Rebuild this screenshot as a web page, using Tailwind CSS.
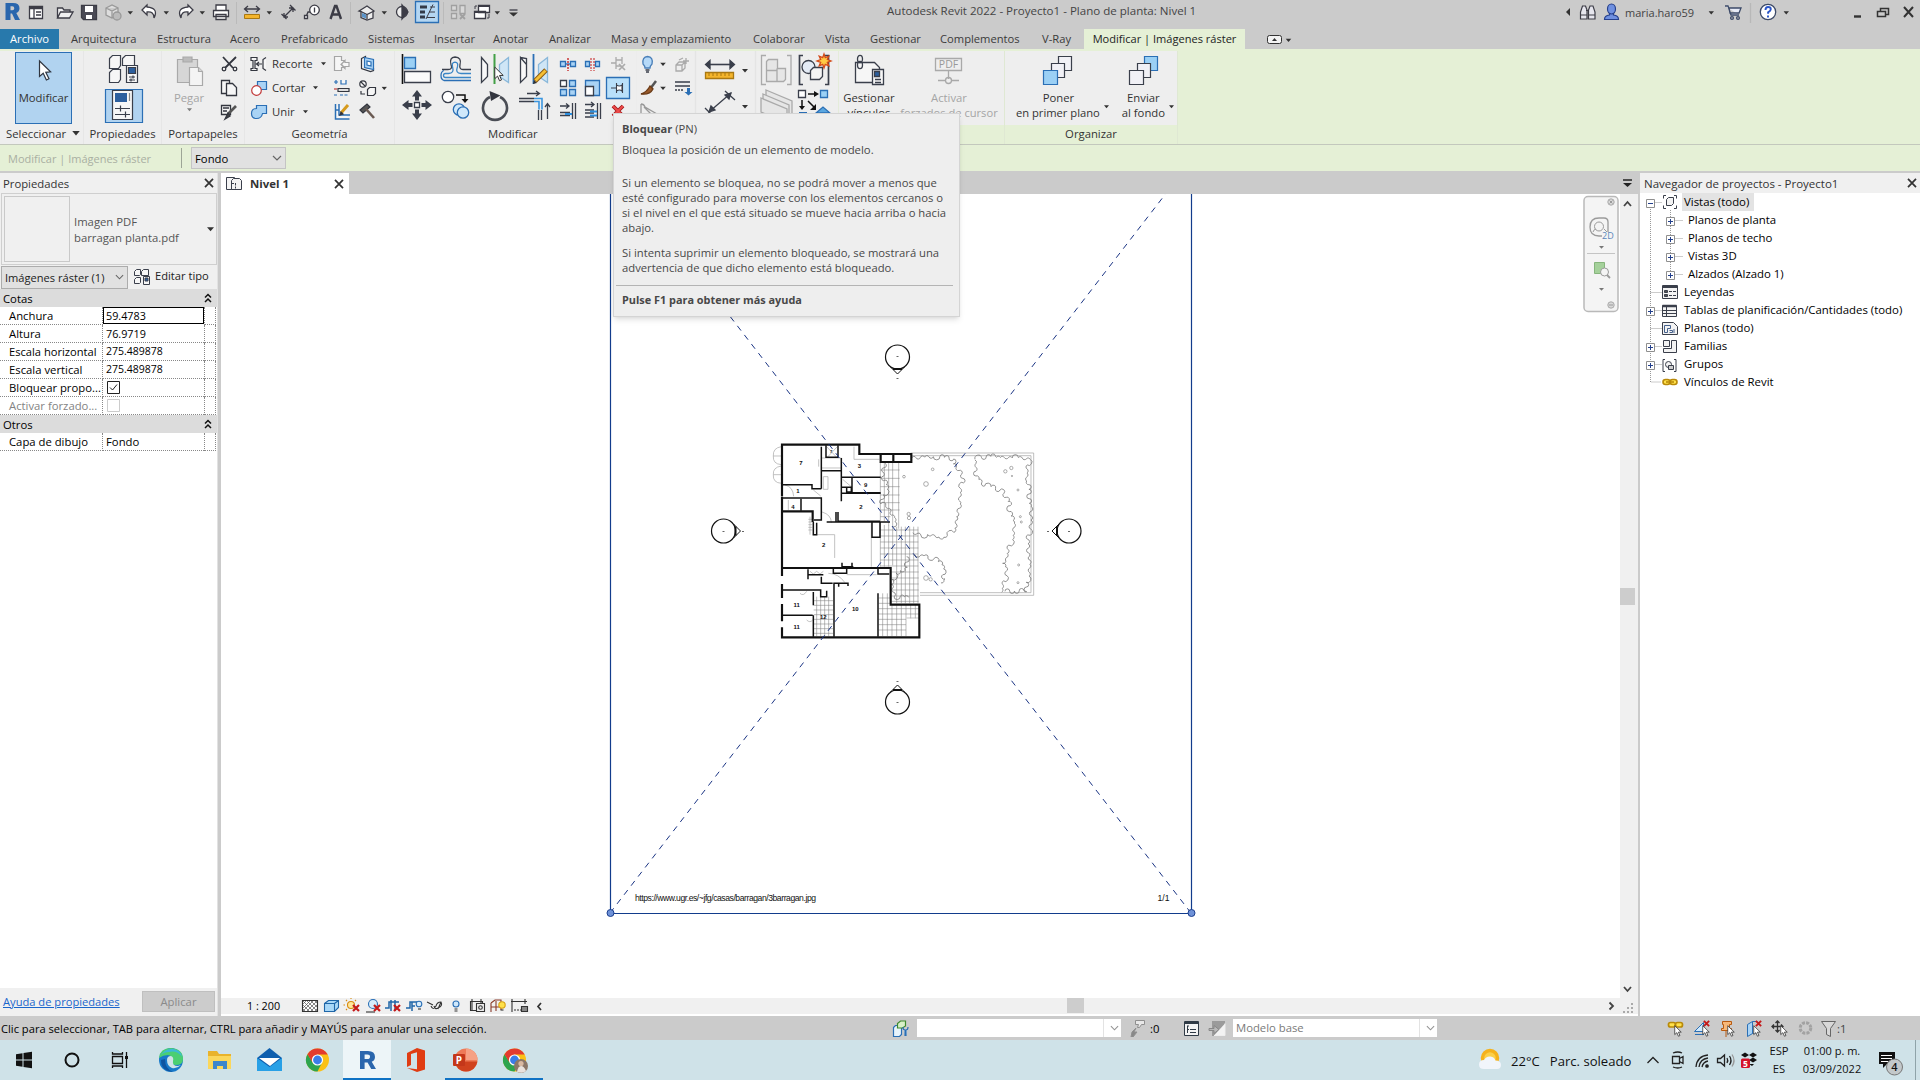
<!DOCTYPE html>
<html lang="es">
<head>
  <meta charset="UTF-8" />
  <meta name="viewport" content="width=device-width,initial-scale=1.0" />
  <title>Autodesk Revit 2022 - Proyecto1</title>
  <script src="https://cdn.jsdelivr.net/npm/@tailwindcss/browser@4"></script>
</head>

<body class="w-[1920px] h-[1080px] overflow-hidden flex flex-col bg-[#cbcbcb] font-['Open_Sans','Noto_Sans',sans-serif] text-[11.3px] leading-[15px] text-[#2e2e2e] whitespace-nowrap">

  <!-- shared symbols -->
  <svg class="hidden">
    <symbol id="caret" viewBox="0 0 6 4"><path d="M0 0h6L3 3.6z" fill="#333" /></symbol>
    <symbol id="close" viewBox="0 0 10 10"><path d="M1 .8l8 8.4M9 .8L1 9.2" stroke="#333" stroke-width="1.7" fill="none" /></symbol>
    <symbol id="chev" viewBox="0 0 10 6"><path d="M1 1l4 4 4-4" stroke="#666" stroke-width="1.2" fill="none" /></symbol>
    <symbol id="dblup" viewBox="0 0 8 10"><path d="M1 4.5l3-3 3 3M1 9l3-3 3 3" stroke="#111" stroke-width="1.5" fill="none" /></symbol>
    <symbol id="plus" viewBox="0 0 9 9"><path d="M.5.5h8v8h-8z" fill="#fff" stroke="#8f8f8f" /><path d="M2 4.5h5M4.5 2v5" stroke="#23408c" /></symbol>
    <symbol id="minus" viewBox="0 0 9 9"><path d="M.5.5h8v8h-8z" fill="#fff" stroke="#8f8f8f" /><path d="M2 4.5h5" stroke="#23408c" /></symbol>
    <symbol id="cursor" viewBox="0 0 9 14"><path d="M.7.8v10.4l2.5-2.3 1.8 4.2 1.8-.8-1.8-4h3.3z" fill="#fff" stroke="#333" stroke-width=".9" /></symbol>
    <symbol id="redx" viewBox="0 0 8 8"><path d="M1 1l6 6M7 1L1 7" stroke="#c41a1a" stroke-width="2.2" /></symbol>
    <symbol id="chrome" viewBox="0 0 24 24">
      <circle cx="12" cy="12" r="11.5" fill="#fbc116" />
      <path d="M2 6.2A11.5 11.5 0 0 0 12 23.5L16.6 14.6 7.4 14.6z" fill="#2da44e" />
      <path d="M12 6.6h10.2L22 6.2A11.5 11.5 0 0 0 2 6.2l5 8.4z" fill="#e33b2e" />
      <circle cx="12" cy="12" r="5.6" fill="#fff" /><circle cx="12" cy="12" r="4.4" fill="#3a7de8" />
    </symbol>
  </svg>

  <!-- title bar -->
  <header class="flex h-[29px] shrink-0">
    <svg class="w-[530px] h-[29px] shrink-0" viewBox="0 0 530 29" fill="none" stroke="#3c3c46" stroke-width="1.3">
      <path d="M5.500 3h7.500q6.500 0 6.500 5.200 0 3.500-3.200 4.800L20 20h-5l-3-6.500h-1.500V20h-5zM10.500 6.300v4h1.800q2 0 2-2t-2-2z" fill="#2a66ad" fill-rule="evenodd" stroke="none" />
      <path d="M29.500 6.500h13v12h-13z" fill="#fff" /><path d="M29.500 8h13" stroke-width="2.500" /><path d="M34 9v9M36 12h5M36 15h5" />
      <path d="M57.500 18V8h5l1.500 2h6v2M57.500 18l3-6h12.500l-3.500 6z" fill="#f0f0f0" />
      <path d="M81.500 5.500h15v14h-13l-2-2z" fill="#4a4a55" /><path d="M85 6h8v6h-8zM86 15h6v4h-6z" fill="#fff" stroke="none" />
      <g stroke="#999"><path d="M106 8l6-3 6 3v7l-6 3-6-3zM106 8l6 3 6-3M112 11v7" fill="#ddd" /><circle cx="117" cy="16" r="4" fill="#bbb" /></g>
      <path d="M147 5l-5 5 5 5v-3q7-1 7 6 5-10-7-11z" fill="#fff" />
      <path d="M188 5l5 5-5 5v-3q-7-1-7 6-5-10 7-11z" fill="#fff" />
      <path d="M216 10V5h10v5M213.500 10.500h15v6h-15zM216 14.500h10v5h-10z" fill="#fff" />
      <path d="M236.500 2v22M350.500 2v22M443.500 2v22" stroke="#bababa" stroke-width="1" />
      <path d="M245 9h14M248 6l-3.500 3 3.500 3M256 6l3.500 3-3.500 3" /><path d="M244.500 14.500h15v4h-15z" fill="#f4b52c" stroke="#a97812" stroke-width="1" />
      <path d="M284 17l9-9M281.500 14l5 5M290 5l5.500 5.500M284 13v4h4M289 8h4v4" />
      <circle cx="314.500" cy="10" r="4.800" fill="#fff" /><path d="M314.500 7.500v5M306 17l2-5h2" /><path d="M304.500 15.500h3v3h-3z" fill="#fff" />
      <path d="M330.500 19l4.500-13h1.500L341 19M332 14.500h7" stroke-width="2.400" />
      <path d="M359 11l8-5 7 5-1 1v6l-6 2-6-2.500v-6z" fill="#eee" /><path d="M361 11.500l6 3 6-3M367 14v5" /><path d="M362 13l4 1.500v4l-4-1.500z" fill="#5a93c8" stroke="none" />
      <circle cx="402" cy="12" r="5.500" fill="#eee" /><path d="M402 5l6 7-6 7z" fill="#3c3c46" />
      <path d="M415.500 1.500h23v21h-23z" fill="#b4d6f2" stroke="#2b6fb5" /><path d="M420 7h7M420 12h5M420 17h5" stroke-width="3" stroke="#333a48" /><path d="M433 4.500l-7 14.500" stroke-width="1" /><path d="M430 7h5M429 12h6M427 17.500h8" stroke-width="1" />
      <g stroke="#a0a0a0"><path d="M451.500 5.500h5v5h-5zM451.500 13.500h5v5h-5zM460 5.500h5v8h-5z" fill="#d8d8d8" /><path d="M460 14l5 5M465 14l-5 5" stroke-width="1.800" /></g>
      <path d="M478.500 5.500h11v7h-11zM474.500 11.500h11v7h-11z" fill="#fff" /><path d="M478.500 6h11M474.500 12h11" stroke-width="1.800" /><path d="M489 14v4h-2M475 9V6h2" stroke-width="1" />
      <path d="M509.500 10h8" /><path d="M509 12.500h9l-4.500 4z" fill="#333" stroke="none" />
      <g stroke="none"><use href="#caret" x="127.500" y="11" width="5.500" height="4" /><use href="#caret" x="163.500" y="11" width="5.500" height="4" /><use href="#caret" x="199.500" y="11" width="5.500" height="4" /><use href="#caret" x="266.500" y="11" width="5.500" height="4" /><use href="#caret" x="381.500" y="11" width="5.500" height="4" /><use href="#caret" x="494.500" y="11" width="5.500" height="4" /></g>
    </svg>
    <h1 class="w-[1023px] pl-[357px] pt-[3px] text-[11.550px] text-[#444]">Autodesk Revit 2022 - Proyecto1 - Plano de planta: Nivel 1</h1>
    <div class="flex items-start">
      <svg class="w-[72px] h-[29px]" viewBox="1553 0 72 29" fill="#e6e6ee" stroke="#3c3c46" stroke-width="1.200">
        <path d="M1570 8v8l-4-4z" fill="#333" stroke="none" />
        <path d="M1580.500 19v-7l2-6h3l1.500 4v9zM1588.500 19v-9l1.500-4h3l2 6v7zM1586 10.500h3M1580.500 15h6M1588.500 15h6" />
        <g fill="#6f90e0" stroke="#26408c"><path d="M1604.500 19.500q0-4 5-4.500v-2h4v2q5 .5 5 4.500z" /><ellipse cx="1611.500" cy="9" rx="4" ry="5" /></g>
      </svg>
      <span class="w-[80px] pt-[5px] text-[11px] text-[#444]">maria.haro59</span>
      <svg class="w-[215px] h-[29px]" viewBox="1705 0 215 29" fill="none" stroke="#3c4a68" stroke-width="1.300">
        <use href="#caret" x="1708.500" y="11" width="5.500" height="4" stroke="none" /><use href="#caret" x="1783.500" y="11" width="5.500" height="4" stroke="none" />
        <path d="M1725 6h3l3 9h8M1729 8h12l-2 5h-9z" fill="#e8ecf8" /><circle cx="1732" cy="18" r="1.400" /><circle cx="1738" cy="18" r="1.400" />
        <path d="M1750.500 3v20" stroke="#b8b8b8" />
        <circle cx="1768" cy="12" r="7.700" fill="#fff" /><path d="M1765.500 10q0-3 2.600-3 2.700 0 2.700 2.300 0 1.500-2.700 3v1.500M1768 15.500v2" stroke="#2a55c8" stroke-width="1.900" />
        <path d="M1854 16.500h7" stroke="#333" stroke-width="2.400" /><path d="M1880.500 11V8.500h8v6h-3M1877.500 11.500h8v5h-8z" stroke="#333" stroke-width="1.500" />
        <path d="M1904 7l9 10M1913 7l-9 10" stroke="#333" stroke-width="2" />
      </svg>
    </div>
  </header>

  <!-- ribbon tabs -->
  <nav class="flex h-5 shrink-0 leading-5 text-[11.200px] text-[#3a3a3a]">
    <a class="w-[59px] bg-[#2879ac] text-white text-center">Archivo</a>
    <a class="ml-3 w-[86px]">Arquitectura</a>
    <a class="w-[73px]">Estructura</a>
    <a class="w-[51px]">Acero</a>
    <a class="w-[87px]">Prefabricado</a>
    <a class="w-[66px]">Sistemas</a>
    <a class="w-[59px]">Insertar</a>
    <a class="w-[56px]">Anotar</a>
    <a class="w-[62px]">Analizar</a>
    <a class="w-[142px]">Masa y emplazamiento</a>
    <a class="w-[72px]">Colaborar</a>
    <a class="w-[45px]">Vista</a>
    <a class="w-[70px]">Gestionar</a>
    <a class="w-[102px]">Complementos</a>
    <a class="w-[42px]">V-Ray</a>
    <a class="w-[161px] bg-[#e5f0d6] text-center text-[11.050px] text-[#222]">Modificar | Imágenes ráster</a>
    <svg class="ml-5 w-8 h-5" viewBox="1265 29 32 20"><rect x="1267.500" y="35.500" width="14" height="8" rx="2" fill="#f3f3f3" stroke="#333" /><path d="M1272 41h5l-2.500-3z" fill="#333" /><use href="#caret" x="1285.500" y="38.500" width="6" height="4" /></svg>
  </nav>

  <!-- ribbon -->
  <section class="relative flex h-24 shrink-0 bg-[#e5f0d6] border-t-2 border-[#e5f0d6] border-b border-b-[#c3c8bd] text-[#333]">
    <div class="w-[84px] bg-[#eeeeee] border-r border-[#e6e6e6] pl-[15px] pt-px">
      <div class="w-[57px] h-[72px] bg-[#b1d3f0] border border-[#2b6fb5] flex flex-col items-center">
        <svg class="w-5 h-7 mt-[3px]" viewBox="0 0 20 28"><path d="M5.500 5v15.500l3.700-3.200 3.200 6.700 2.600-1.300-3.200-6.400 4.800-.5z" fill="#fff" stroke="#2f3540" stroke-width="1.200" /></svg>
        <span class="mt-[6px]">Modificar</span>
      </div>
      <p class="-ml-[9px] mt-[2px] flex items-center gap-[6px]">Seleccionar <svg class="w-2 h-[5px]"><use href="#caret" /></svg></p>
    </div>

    <div class="w-[78px] bg-[#eeeeee] border-r border-[#e6e6e6] flex flex-col items-center">
      <svg class="w-[78px] h-[75px] shrink-0" viewBox="84 51 78 75" fill="#f6f6f6" stroke="#3a3f4b" stroke-width="1.200">
        <path d="M109.500 58.500l3-3h8v10l-2 3h-9zM122.500 58.500l3-3h9v10h-12zM109.500 72.500l3-3h8v10l-2 3h-9z" />
        <path d="M126.500 65.500h11v17h-11z" /><path d="M128.500 67.500h7v6h-7z" fill="#2c5f9e" /><path d="M129 77h6M129 80h6M133 75.500v3M131 78.500v3" />
        <path d="M105.500 89.500h37v33h-37z" fill="#b1d3f0" stroke="#2b6fb5" /><path d="M112.500 90.500h20v29h-20z" /><path d="M115 93h12v9h-12z" fill="#2c5f9e" stroke="none" /><path d="M129.500 93v8" stroke="#888" /><path d="M115 108.500h15M115 114.500h15M120.500 105.500v6M125.500 111.500v6" />
      </svg>
      <span>Propiedades</span>
    </div>

    <div class="w-[83px] bg-[#eeeeee] border-r border-[#e6e6e6] flex flex-col items-center">
      <div class="flex h-[75px] self-start">
        <div class="w-[54px] flex flex-col items-center text-[#a5a5a5]">
          <svg class="w-[30px] h-[34px] mt-[3px]" viewBox="0 0 30 34" stroke="#a9a9a9" stroke-width="1.200" fill="#d6d6d6"><path d="M3.500 5.500h20v23h-20z" /><path d="M9 3h9v5H9z" fill="#bbb" /><path d="M15.500 13.500h9l4 4v14h-13z" fill="#f4f4f4" /><path d="M24.500 13.500v4h4" /></svg>
          <span class="mt-[2px]">Pegar</span>
          <svg class="w-[5px] h-1 mt-[3px] opacity-60"><use href="#caret" /></svg>
        </div>
        <svg class="w-7 h-[75px]" viewBox="216 51 28 75" fill="#f6f6f6" stroke="#33363f" stroke-width="1.300">
          <path d="M223 57l10 11M236 57l-11 11" stroke-width="1.800" /><circle cx="224" cy="69" r="1.800" /><circle cx="235" cy="69" r="1.800" />
          <path d="M221.500 80.500h8v13h-8z" /><path d="M226.500 83.500h6l4 4v8h-10z" />
          <path d="M221.500 105.500h9v9h-9zM223 108h6M223 111h4" /><path d="M236 106l-8 8" stroke="#555" stroke-width="2.600" /><path d="M228 113l-3 6 5-3z" fill="#444" />
        </svg>
      </div>
      <span>Portapapeles</span>
    </div>

    <div class="w-[150px] bg-[#eeeeee] border-r border-[#e6e6e6] flex flex-col items-center">
      <div class="flex h-[75px] self-start">
        <svg class="w-[27px] h-[75px]" viewBox="245 51 27 75" fill="#f6f6f6" stroke="#33363f" stroke-width="1.200">
          <path d="M251 57.500h6v3h-2v8h2v2h-6v-2h2v-8h-2zM266 57.500l-3 2v9l3 2M262 64h-5M259 62l-2.500 2 2.500 2" />
          <path d="M257.500 81.500h9v8h-9z" fill="#a9d3f5" stroke="#2b6fb5" /><circle cx="256.500" cy="90.500" r="4.800" fill="#fff" stroke="#c23b3b" />
          <path d="M256.500 105.500h10v8h-4q-1 5-6 5t-5-5 5-5z" fill="#a9d3f5" stroke="#2b6fb5" />
        </svg>
        <div class="w-[58px] flex flex-col pt-[5px] gap-[9px]">
          <span class="flex items-center gap-2">Recorte <svg class="w-[5px] h-1"><use href="#caret" /></svg></span>
          <span class="flex items-center gap-2">Cortar <svg class="w-[5px] h-1"><use href="#caret" /></svg></span>
          <span class="flex items-center gap-2">Unir <svg class="w-[5px] h-1"><use href="#caret" /></svg></span>
        </div>
        <svg class="w-[64px] h-[75px]" viewBox="330 51 64 75" fill="#f6f6f6" stroke="#33363f" stroke-width="1.200">
          <g stroke="#a5a5a5"><path d="M334.500 56.500h7v4h3l-3 4 3 3h-3v3h-7zM341 64.500l4-4v2h4v4h-4v2z" /></g>
          <path d="M361.500 58.500l4-2v11l8 1v2l-3 1-9-3z" /><path d="M364.500 57.500l9 2v10l-9-2z" fill="#a9d3f5" stroke="#2b6fb5" /><path d="M367 61l4 1v4l-4-1z" fill="#fff" stroke="#2b6fb5" />
          <path d="M334 82h4M336 80v4M341 80v4h5v-4" stroke="#2b6fb5" /><path d="M338 88.500h11v3h-11z" fill="#ddd" /><path d="M334 95h4M340 95h9" stroke="#2b6fb5" stroke-dasharray="3 1.500" /><path d="M334 89h3" stroke="#c23b3b" />
          <circle cx="363" cy="84" r="3.200" /><path d="M361 82l4 4M361 91v3h4" /><path d="M367.500 89.500l2-2h6v6l-2 2h-6z" />
          <path d="M335.500 104v15h14M339 104v11h11M335.500 110h3" stroke="#2b6fb5" stroke-width="1.500" /><path d="M341 113l7-8" stroke="#d69a1c" stroke-width="3" /><path d="M340 115l1-3 2 2z" fill="#333" />
          <path d="M360 110l7-6 3 3-7 6z" fill="#555" /><path d="M366 109l8 9" stroke="#6a5a52" stroke-width="2.600" />
          <use href="#caret" x="381.500" y="86.500" width="5.500" height="4" stroke="none" />
        </svg>
      </div>
      <span>Geometría</span>
    </div>

    <div class="w-[241px] bg-[#eeeeee] flex flex-col">
      <svg class="w-[241px] h-[75px] shrink-0" viewBox="395 51 241 75" fill="none" stroke="#3a3f4b" stroke-width="1.300">
        <path d="M402.500 54v30" stroke-width="1.600" stroke="#111" /><path d="M404.500 57.500h11v11h-11z" fill="#9bd0f5" stroke="#2b6fb5" /><path d="M404.500 71.500h26v11h-26z" fill="#fafafa" />
        <path d="M442 69.500h6q5 0 3-5-2-7 4-7.500 7 .5 5 7.500-1 5 3 5h8" /><path d="M471 80.500h-27q-3-1-3-5t3-5" stroke="#2b6fb5" /><path d="M471 73.500h-10q-6 0-3.500-7 1-4-2.500-4.300-3.500.3-2.500 4.300 2 7-4 7h-3q-2 0-2 2t2 2h25.500" stroke="#3b86c6" />
        <path d="M481.500 57.500l6 7v12l-6 6z" fill="#f8f8f8" /><path d="M508.500 57.500l-9 7v12l9 6z" fill="#cfe6f6" stroke="#8ab8da" /><path d="M494.500 54v30" stroke="#43a047" stroke-width="2" /><use href="#cursor" x="494" y="66" width="10" height="16" stroke="none" />
        <path d="M520.500 57.500l6 7v12l-6 6zM526.500 64.500v-6l-6-1" fill="#f8f8f8" /><path d="M547.500 57.500l-9 7v12l9 6z" fill="#cfe6f6" stroke="#8ab8da" /><path d="M533.500 54v30" stroke="#2b6fb5" stroke-width="1.800" /><path d="M535 81l11-11" stroke="#8a5a10" stroke-width="5" /><path d="M535.500 80.500l10-10" stroke="#f5bf35" stroke-width="3" /><path d="M533 84l1-4 3 3z" fill="#333" stroke="none" />
        <path d="M560.500 61.500h5v5h-5zM570.500 61.500h5v5h-5z" fill="#a9d3f5" stroke="#2b6fb5" /><path d="M565 64h6" stroke="#2b6fb5" /><path d="M568 58v13" stroke="#c41a1a" stroke-dasharray="2 1" />
        <path d="M585.500 61.500h4v5h-4zM595.500 61.500h4v5h-4z" fill="#a9d3f5" stroke="#2b6fb5" /><path d="M591 58v13M594 58v13" stroke="#c41a1a" stroke-width="1" stroke-dasharray="2 1" />
        <g stroke="#aaa"><path d="M611 63h5M616 57v12M616 60h6M616 66h5M622 57v7" /><path d="M619 64l6 6M625 64l-6 6" stroke-width="1.700" /></g>
        <path d="M560.500 80.500h6v6h-6z" fill="#fff" /><path d="M569.500 80.500h6v6h-6zM560.500 89.500h6v6h-6zM569.500 89.500h6v6h-6z" fill="#a9d3f5" stroke="#2b6fb5" />
        <path d="M585.500 80.500h14v15h-14z" fill="#a9d3f5" stroke="#2b6fb5" /><path d="M585.500 86.500h8v9h-8z" fill="#fff" />
        <path d="M606.500 77.500h23v21h-23z" fill="#b9e0fa" stroke="#2b6fb5" /><path d="M611 88h5M616.500 83v10M616.500 85q3 2 5.500 0v6q-2.500-2-5.500 0M622.500 83v10" fill="#fff" stroke-width="1.100" />
        <path d="M560 106h9M566 103.500l3 2.500-3 2.500M572.500 103v16M575.500 103v16M560 112.500h10M560 115.500h10" /><path d="M565 114h7" stroke="#2b8fe0" stroke-width="2" />
        <path d="M585 104.500h9M591 102l3 2.500-3 2.500M597.500 103v16M600.500 103v16M585 110h9M585 113h9M585 117h9" /><path d="M590 111.500h7M590 115.500h7" stroke="#2b8fe0" stroke-width="2" />
        <path d="M613 106l10 10M623 106l-10 10" stroke="#a01818" stroke-width="3.800" /><path d="M613 106l10 10M623 106l-10 10" stroke="#ee4a4a" stroke-width="2" />
        <path d="M417 90l5 6.500h-3v4h-4v-4h-3zM417 120l5-6.500h-3v-4h-4v4h-3zM402 105l6.500-5v3h4v4h-4v3zM432 105l-6.500-5v3h-4v4h4v3z" fill="#3a3f4b" stroke="none" /><path d="M414.500 102.500h5v5h-5z" fill="#fff" />
        <circle cx="448" cy="97" r="5.700" fill="#fff" /><path d="M456 95h9v5" stroke="#111" stroke-width="1.500" /><path d="M461.500 99h7l-3.500 4z" fill="#111" stroke="none" /><circle cx="459" cy="109.500" r="5.700" fill="#cfe8fb" stroke="#2b6fb5" /><circle cx="463" cy="112.500" r="5.700" fill="#cfe8fb" stroke="#2b6fb5" />
        <path d="M500 97a12 12 0 1 1-10 0" stroke-width="2.600" stroke="#4a4d55" /><path d="M489.500 91l11 4.500-9.500 5.500z" fill="#33363f" stroke="none" />
        <path d="M527 93.500h12M536 91l3.500 2.500-3.500 2.500M519 98.500h15M519 101.500h15M538.500 110v10M541.500 110v10M547.500 119v-15M545 107l2.500-3.500 2.500 3.500" /><path d="M534 98.500h8v11M534 101.500h5v8" stroke="#3b96e0" stroke-width="1.600" />
      </svg>
      <span class="ml-[93px]">Modificar</span>
    </div>

    <svg class="w-[202px] h-[93px] shrink-0 bg-[#eeeeee]" viewBox="636 51 202 93" fill="none" stroke="#3a3f4b" stroke-width="1.300">
      <path d="M635.500 51v92M695.500 51v92M755.500 51v92" stroke="#e4e4e4" />
      <path d="M645 68q0-2-2-4-1-7 4.500-7.500 6 .5 4.500 7.500-2 2-2 4z" fill="#b5d9f8" stroke="#4a7fb8" /><path d="M645.500 70h4M646 72h3" />
      <g stroke="#aaa"><path d="M676 65l3-3h6v6l-3 3h-6zM676 65h6v6M682 65l3-3M679 60l4-2M686 58v6M683 61h6" /></g>
      <path d="M656 81l-6 8" stroke="#555" stroke-width="2.500" /><path d="M650 86l3 3q-3 6-12 5 6-2 9-8z" fill="#9a5a2a" stroke="#6b3b17" />
      <path d="M675 82h15M675 86h15" /><path d="M675 90h9" stroke-dasharray="2 1" /><path d="M687 88v4h-2.500l4 3.500 4-3.500H690v-4z" fill="#2b6fb5" stroke="none" />
      <path d="M641 104q3 0 4 3l12 7M641 104v10M644 107l8 8" stroke="#999" />
      <path d="M706 64.500h28" stroke-width="1.600" /><path d="M710 60.500l-4.500 4 4.500 4zM730 60.500l4.500 4-4.500 4z" fill="#3a3f4b" /><path d="M705.500 72.500h28v6h-28z" fill="#f4b52c" stroke="#a97812" /><path d="M709 73v3M713 73v3M717 73v3M721 73v3M725 73v3M729 73v3" stroke="#a97812" stroke-width="1" />
      <path d="M709 112l22-19M725 91l10 9M705 108l8 8" /><path d="M731 93l-2 6-4-4zM709 112l2-6 4 4z" fill="#3a3f4b" />
      <g stroke="#aaa" fill="#e6e6e6"><path d="M766 55.500h-4.500v29h4.500M787 55.500h4v29h-4" fill="none" /><path d="M766.500 61.500l2-2h9v9h8v11l-2 2h-17z" /><path d="M766 70.500h11v11M777 68.500v13" fill="none" /><path d="M766 90l26 11v14l-26-11z" /><path d="M763 94l26 11v14l-26-11z" /><path d="M761 98l26 11v14l-26-11z" /></g>
      <path d="M803 55.500h-3.500v29h3.500M825 55.500h3.500v29h-3.500" stroke-width="1.700" /><circle cx="808.500" cy="67" r="6.500" fill="#e4ebf5" /><path d="M810.500 70.500l3-3h9v9l-3 3h-9z" fill="#f4f4f4" />
      <path d="M824 54l1.300 3.700 3.500-1.500-1.500 3.300 3.700 1.500-3.700 1.300 1.500 3.500-3.500-1.500-1.300 3.700-1.300-3.700-3.500 1.500 1.500-3.500-3.700-1.300 3.700-1.500-1.500-3.300 3.500 1.500z" fill="#ffcb45" stroke="#d34a1a" />
      <path d="M798.500 90.500h7v7h-7z" fill="#fff" /><path d="M820.500 90.500h7v7h-7z" fill="#9bd0f5" stroke="#2b6fb5" /><path d="M808 94h8M802 100v8M808 101l6 6" stroke="#111" stroke-width="1.500" /><path d="M814 91v6l5-3zM799 106h6l-3 4zM816 104v6h-6z" fill="#111" stroke="none" /><path d="M816 113l7-6 7 6z" fill="#5aa7e0" stroke="#2b6fb5" /><path d="M799 113h8" stroke="#2b6fb5" stroke-width="2" />
      <g stroke="none"><use href="#caret" x="660" y="62.500" width="6" height="4" /><use href="#caret" x="660" y="86.500" width="6" height="4" /><use href="#caret" x="742" y="69" width="6" height="4" /><use href="#caret" x="742" y="105" width="6" height="4" /></g>
    </svg>

    <div class="w-[166px] h-[74px] flex bg-[#eeeeee] border-l border-[#e4ecda]">
      <div class="w-[60px] flex flex-col items-center text-center">
        <svg class="w-[34px] h-[34px] mt-[3px] shrink-0" viewBox="0 0 34 34" fill="#f6f6f6" stroke="#3a3f4b" stroke-width="1.300"><path d="M3.500 8.500h19l5 5v15h-24z" /><path d="M20.500 15.500h11v15h-11z" /><path d="M22.500 17.500h5v5h-5z" fill="#2c5f9e" /><path d="M23 25.500h6M23 28.500h6" /><ellipse cx="8" cy="5" rx="2.500" ry="3.700" fill="none" /><ellipse cx="8" cy="11" rx="2.500" ry="3.700" fill="none" /></svg>
        <span class="mt-[2px]">Gestionar</span><span>vínculos</span>
      </div>
      <div class="w-[100px] flex flex-col items-center text-center text-[#a5a5a5]">
        <svg class="w-[34px] h-[34px] mt-[3px] shrink-0" viewBox="0 0 34 34" fill="none" stroke="#a9a9a9" stroke-width="1.300"><path d="M3.500 4.500h26v12h-26zM16.500 17v8M6 26.500h7M20 26.500h7" /><circle cx="16.500" cy="26.500" r="3" /><text x="16.500" y="14.300" text-anchor="middle" font-size="10.500" fill="#999" stroke="none">PDF</text></svg>
        <span class="mt-[2px]">Activar</span><span class="text-[11.150px]">forzados de cursor</span>
      </div>
    </div>

    <div class="w-[174px] flex flex-col items-center border-x border-[#dfe8d3]">
      <div class="w-full h-[74px] flex bg-[#eeeeee]">
        <div class="w-[106px] flex flex-col items-center">
          <svg class="w-[34px] h-[34px] mt-[3px] shrink-0" viewBox="0 0 34 34" fill="#f1f1f6" stroke="#3a3f4b" stroke-width="1.200"><path d="M18.500 2.500h13v14h-13z" /><path d="M11.500 9.500h13v14h-13z" /><path d="M3.500 16.500h14v14h-14z" fill="#9bd0f5" stroke="#2b6fb5" /></svg>
          <span class="mt-[2px] pl-[2px]">Poner</span>
          <span class="pl-[10px] flex gap-[4px] text-[11.200px]">en primer plano <svg class="w-[5px] h-1"><use href="#caret" /></svg></span>
        </div>
        <div class="w-[68px] flex flex-col items-center">
          <svg class="w-[34px] h-[34px] mt-[3px] shrink-0" viewBox="0 0 34 34" fill="#f1f1f6" stroke="#3a3f4b" stroke-width="1.200"><path d="M18.500 2.500h13v14h-13z" fill="#9bd0f5" stroke="#2b6fb5" /><path d="M11.500 9.500h13v14h-13z" /><path d="M3.500 16.500h14v14h-14z" /></svg>
          <span class="mt-[2px]">Enviar</span>
          <span class="pl-[9px] flex gap-[4px]">al fondo <svg class="w-[5px] h-1"><use href="#caret" /></svg></span>
        </div>
      </div>
      <span class="mt-px">Organizar</span>
    </div>

    <!-- tooltip -->
    <aside class="absolute z-20 left-[613px] top-[62px] w-[347px] h-[204px] bg-[#eeeeee] border border-[#d4d4d4] shadow-md px-2 pt-[7px] text-[#484848] text-[11.250px]">
      <p><b class="text-[11.100px]">Bloquear</b> (PN)</p>
      <p class="mt-[6px] text-[11.350px]">Bloquea la posición de un elemento de modelo.</p>
      <p class="mt-[18px]">Si un elemento se bloquea, no se podrá mover a menos que<br />esté configurado para moverse con los elementos cercanos o<br />si el nivel en el que está situado se mueve hacia arriba o hacia<br />abajo.</p>
      <p class="mt-[10px]">Si intenta suprimir un elemento bloqueado, se mostrará una<br />advertencia de que dicho elemento está bloqueado.</p>
      <p class="-ml-[6px] -mr-[2px] mt-[10px] pl-[6px] pt-[6px] border-t border-[#b4b4b4] font-bold text-[10.900px]">Pulse F1 para obtener más ayuda</p>
    </aside>
  </section>

  <!-- options bar -->
  <div class="flex items-center h-[26px] shrink-0 bg-[#e5f0d6]">
    <span class="w-[181px] pl-2 text-[11px] text-[#a9afa2]">Modificar | Imágenes ráster</span>
    <i class="w-px h-5 bg-[#9da596]"></i>
    <div class="ml-[9px] w-[95px] h-[22px] flex items-center justify-between bg-[#e1e1e1] border border-[#c4c4c4] px-[3px] text-black">Fondo <svg class="w-[10px] h-[6px]"><use href="#chev" /></svg></div>
  </div>

  <main class="flex h-[845px] shrink-0 pt-[2px]">

    <!-- properties palette -->
    <aside class="w-[218px] flex flex-col bg-[#f0f0f0] border-r border-[#e2e2e2]">
      <div class="h-5 flex items-center justify-between pl-[3px] pr-[3px] text-[#333]">Propiedades <svg class="w-[10px] h-[10px]"><use href="#close" /></svg></div>
      <div class="ml-px w-[216px] h-[72px] shrink-0 flex items-center border border-[#cfcfcf] pl-[2px] pr-[2px] text-[#555] leading-4">
        <div class="w-[66px] h-[66px] border border-[#c9c9c9]"></div>
        <p class="grow pl-1 pt-[2px]">Imagen PDF<br />barragan planta.pdf</p>
        <svg class="w-[7px] h-[5px]"><use href="#caret" /></svg>
      </div>
      <div class="flex items-center h-[24px] shrink-0 pl-px text-[#222]">
        <div class="w-[127px] h-[23px] flex items-center justify-between bg-[#e1e1e1] border border-[#acacac] px-[3px] text-[11.100px]">Imágenes ráster (1) <svg class="w-[9px] h-[6px]"><use href="#chev" /></svg></div>
        <svg class="ml-[5px] w-[18px] h-[18px]" viewBox="0 0 18 18" fill="#f6f6f6" stroke="#3a3f4b"><path d="M1.500 3.500l2-2h4v5l-1 1h-5zM8.500 3.500l2-2h5v6h-7zM1.500 11.500l2-2h4v5l-1 1h-5zM10.500 8.500h6v8h-6z" /><path d="M12 10h3v3h-3z" fill="#2c5f9e" /></svg>
        <span class="ml-[4px] -mt-[3px] text-[11.150px]">Editar tipo</span>
      </div>
      <div class="w-[217px] grow bg-white text-black">
        <div class="h-[18px] flex items-center justify-between bg-[#dcdcdc] pl-[3px] pr-[5px]">Cotas <svg class="w-2 h-[10px]"><use href="#dblup" /></svg></div>
        <div class="grid grid-cols-[103px_101px_12px] leading-[17px]">
          <span class="h-[18px] pl-[9px] border-b border-r border-dotted border-[#888]">Anchura</span><span class="h-[17px] pl-[2px] border border-black leading-[15px] text-[10.800px]">59.4783</span><span class="border-b border-x border-dotted border-[#888]"></span>
          <span class="h-[18px] pl-[9px] border-b border-r border-dotted border-[#888]">Altura</span><span class="pl-[3px] border-b border-dotted border-[#888] text-[10.800px]">76.9719</span><span class="border-b border-x border-dotted border-[#888]"></span>
          <span class="h-[18px] pl-[9px] border-b border-r border-dotted border-[#888] text-[11.150px]">Escala horizontal</span><span class="pl-[3px] border-b border-dotted border-[#888] text-[10.500px]">275.489878</span><span class="border-b border-x border-dotted border-[#888]"></span>
          <span class="h-[18px] pl-[9px] border-b border-r border-dotted border-[#888]">Escala vertical</span><span class="pl-[3px] border-b border-dotted border-[#888] text-[10.500px]">275.489878</span><span class="border-b border-x border-dotted border-[#888]"></span>
          <span class="h-[18px] pl-[9px] border-b border-r border-dotted border-[#888]">Bloquear propo...</span><span class="pl-[4px] pt-[2px] border-b border-dotted border-[#888]"><svg class="w-[13px] h-[13px]" viewBox="0 0 13 13" fill="none" stroke="#222"><path d="M.5.5h12v12H.5zM3 6.500L5.500 9 10 3.500" /></svg></span><span class="border-b border-x border-dotted border-[#888]"></span>
          <span class="h-[18px] pl-[9px] border-b border-r border-dotted border-[#888] text-[#838383]">Activar forzado...</span><span class="pl-[4px] pt-[2px] border-b border-dotted border-[#888]"><svg class="w-[13px] h-[13px]" viewBox="0 0 13 13" fill="none" stroke="#ccc"><path d="M.5.5h12v12H.5z" /></svg></span><span class="border-b border-x border-dotted border-[#888]"></span>
        </div>
        <div class="h-[18px] flex items-center justify-between bg-[#dcdcdc] pl-[3px] pr-[5px]">Otros <svg class="w-2 h-[10px]"><use href="#dblup" /></svg></div>
        <div class="grid grid-cols-[103px_101px_12px] leading-[17px]">
          <span class="h-[18px] pl-[9px] border-b border-r border-dotted border-[#888]">Capa de dibujo</span><span class="pl-[3px] border-b border-dotted border-[#888]">Fondo</span><span class="border-b border-x border-dotted border-[#888]"></span>
        </div>
      </div>
      <div class="flex h-7 shrink-0 items-center justify-between pl-[3px] pr-[2px] pb-[2px]">
        <a class="text-[#1a66cc] underline text-[11.150px]">Ayuda de propiedades</a>
        <button class="w-[73px] h-[21px] bg-[#cccccc] border border-[#bfbfbf] text-[#8a8a8a]">Aplicar</button>
      </div>
    </aside>

    <!-- view window -->
    <section class="ml-[3px] w-[1417px] flex flex-col">
      <div class="h-[21px] flex justify-between">
        <div class="w-[128px] flex items-center bg-white pl-[5px]">
          <svg class="w-[17px] h-[15px]" viewBox="0 0 17 15" fill="#f3f3f3" stroke="#3a3f4b"><path d="M.5 1.500h8v12h-8z" /><path d="M5.500 4.500l2-2h6l2 2v9h-10z" /><path d="M6 7.500h4M9.500 7.500v6" stroke-dasharray="2 1" /></svg>
          <b class="grow pl-[7px] text-[#333] text-[11.400px]">Nivel 1</b>
          <svg class="w-[10px] h-[10px] mr-[5px]"><use href="#close" /></svg>
        </div>
        <svg class="w-[9px] h-[9px] mt-[6px] mr-[6px]" viewBox="0 0 9 9"><path d="M0 1h9" stroke="#222" stroke-width="1.500" /><path d="M0 4h9L4.500 8z" fill="#222" /></svg>
      </div>

      <div class="relative flex h-[804px]">
        <svg class="w-[1399px] h-[804px] bg-white" viewBox="221 194 1399 804" fill="none">
          <!-- imported plan -->
          <g transform="translate(760 430) scale(.33333)">
            <path d="M452 69h369v427H480M452 77h361v411H480" stroke="#a0a0a0" stroke-width="2" />
            <g id="garden" stroke="#7d7d7d" stroke-width="2.500"></g>
            <g stroke="#7c7c7c" stroke-width="1.600">
              <path d="M361 96v178M373 96v178M386 96v190M398 96v310M416 96v200M361 120h58M361 145h58M361 170h58M361 195h58M361 218h58M361 240h58M361 260h30" />
              <path d="M361 275v135M373 285v125M386 285v125M410 290v230M424 290v230M436 290v230M449 290v230M461 290v230M474 290v230M361 300h114M361 318h114M361 336h114M361 354h114M361 372h114M361 390h114M361 408h114M394 426h82M394 444h82M394 462h82M394 480h82M394 498h82M394 514h82" />
              <path d="M368 490v128M382 490v128M396 525v93M410 525v93M424 525v93M438 525v93M452 525v40M466 525v40M356 504h36M356 520h36M356 536h122M356 552h122M356 568h82M356 584h82M356 600h82" />
              <path d="M170 500v118M182 500v118M194 500v118M206 500v118M161 512h58M161 526h58M161 540h58M161 554h58M161 568h58M161 582h58M161 596h58M161 610h58" />
            </g>
            <g stroke="#a5a5a5" stroke-width="2">
              <path d="M64 50q-26 4-24 28h24M64 104q-26-2-24-26M64 108q-26 4-24 26h24M64 160q-26-2-24-26" />
              <path d="M158 314h66v70M334 280v130M282 50v38h76M186 84h58v30h-58M200 50l32 34M232 50l-32 34M75 165q24 5 26 34M85 210v30M176 88v22M190 140h14v38h-14zM150 260v54M260 434h90M186 246q28 8 28 32M248 148l28 24M160 180l22 18M205 430q30 0 50 28M440 564h38" />
              <path d="M145 268h12M145 276h12M145 284h12M145 292h12M145 300h12M150 424l10 8 10-8 10 8 10-8M120 490q10 10 20-6M140 570q10 10 18 0" />
            </g>
            <g stroke="#111" stroke-width="6.500">
              <path d="M66 165V44h232v28h156v24h-92V74M400 74v20M66 165v34M66 200v42M66 244h92v32M66 242v196M66 462v42M66 522v52M66 592v30h412V524h-86V414H66" />
              <path d="M66 164h90v12h28M66 204h118v66h-22M184 50v126M184 122h60v92M198 46v36h36V46M244 84v58h118M276 142v46h86M246 172h28v14h-14v-12M246 190h116M234 246v28h126M200 276h190M228 246v28" stroke-width="4.500" />
              <path d="M160 276v38h10v-36M336 276v46h24v-46M246 398v12M276 398v12M244 410h36M354 414v18h34M66 480h116v20h18v-18M144 418v30M144 434h46M220 416v14h40v-14M222 620V460h14v10M222 460h42v8M160 486v40M160 556v64M66 556h92M354 490v130M123 206v36M184 440v20h34" stroke-width="4.500" />
            </g>
            <g stroke="#777" stroke-width="1.800">
              <circle cx="432" cy="140" r="4" /><circle cx="498" cy="162" r="7" /><circle cx="518" cy="118" r="4" /><circle cx="446" cy="252" r="5" /><circle cx="447" cy="264" r="5" /><circle cx="498" cy="444" r="7" /><circle cx="512" cy="448" r="5" /><circle cx="736" cy="124" r="5" /><circle cx="754" cy="114" r="5" /><circle cx="756" cy="138" r="2" /><circle cx="774" cy="180" r="3" /><circle cx="781" cy="260" r="3" /><circle cx="784" cy="276" r="3" /><circle cx="776" cy="405" r="3" /><circle cx="774" cy="458" r="3" />
            </g>
            <g fill="#111" font-size="18" font-weight="bold" text-anchor="middle" font-family="Liberation Sans, sans-serif">
              <text x="123" y="106">7</text><text x="214" y="70" font-size="13">7</text><text x="298" y="114">3</text><text x="114" y="189">1</text><text x="317" y="170">9</text><text x="99" y="236">4</text><text x="303" y="236">2</text><text x="191" y="350">2</text><text x="110" y="530">11</text><text x="110" y="597">11</text><text x="286" y="543">10</text><text x="190" y="568">12</text>
            </g>
          </g>

          <!-- image frame -->
          <path d="M610 913L1191 161M1191 913L610 161" stroke="#1a3484" stroke-width="1" stroke-dasharray="6 5.500" />
          <path d="M610.500 190V913.500H1191.500V190" stroke="#123c8c" stroke-width="1.200" />
          <g fill="#6f92d8" stroke="#1c3f8f"><circle cx="610.500" cy="913" r="3.500" /><circle cx="1191.500" cy="913" r="3.500" /></g>

          <!-- elevation markers -->
          <g stroke="#111" stroke-width="1.200">
            <circle cx="897.500" cy="357" r="12" /><path d="M890.500 367l7 7 7-7" stroke-width="1" /><path d="M893 369h9" stroke-width="2" /><path d="M896.500 356.500h2M896.500 378.500h2" stroke-width="1" stroke="#666" />
            <circle cx="897.500" cy="702" r="12" /><path d="M890.500 692l7-7 7 7" stroke-width="1" /><path d="M893 690h9" stroke-width="2" /><path d="M896.500 702.500h2M896.500 681.500h2" stroke-width="1" stroke="#666" />
            <circle cx="723.500" cy="531" r="12" /><path d="M733.500 524l7 7-7 7" stroke-width="1" /><path d="M735.500 526.500v9" stroke-width="2" /><path d="M722.500 531.500h2M742 531.500h2" stroke-width="1" stroke="#666" />
            <circle cx="1069" cy="531" r="12" /><path d="M1059 524l-7 7 7 7" stroke-width="1" /><path d="M1057 526.500v9" stroke-width="2" /><path d="M1068 531.500h2M1047 531.500h2" stroke-width="1" stroke="#666" />
          </g>
          <g font-family="Liberation Sans, sans-serif" font-size="8.600" fill="#111">
            <text x="635" y="901" textLength="181">https://www.ugr.es/~jfg/casas/barragan/3barragan.jpg</text><text x="1157.500" y="901">1/1</text>
          </g>
        </svg>

        <!-- navigation bar -->
        <svg class="absolute right-[19px] top-[1px] w-[38px] h-[120px]" viewBox="1581 195 38 120" fill="none" stroke="#9a9a9a">
          <rect x="1584" y="196.500" width="34" height="115" rx="4" fill="#f4f4f4" stroke="#b9b9b9" stroke-width="1.500" />
          <path d="M1587 253.500h28" stroke="#c4c4c4" /><circle cx="1611" cy="202" r="3.200" fill="#d9d9d9" stroke="#aaa" /><path d="M1609.500 200.500l3 3M1612.500 200.500l-3 3" /><circle cx="1611" cy="305" r="3.200" fill="#d9d9d9" stroke="#aaa" /><path d="M1609 305h4" />
          <path d="M1608 232v-10q0-4-4-4h-5q-9 0-9 9t9 9h3" stroke-width="1.300" /><circle cx="1599" cy="226.500" r="4.500" /><path d="M1593 232q1-3 3-3M1604 229l3 3" />
          <text x="1602" y="239" font-size="9" fill="#5b87bb" stroke="none">2D</text>
          <path d="M1594.500 262.500h10v11h-10z" fill="#a5d19b" stroke="#86b57c" /><circle cx="1604.500" cy="272" r="4" fill="#f4f4f4" /><path d="M1607 275l3 3" stroke-width="1.800" />
          <path d="M1599 246h5l-2.500 2.800zM1599 288h5l-2.500 2.800z" fill="#777" stroke="none" />
        </svg>

        <!-- vertical scrollbar -->
        <svg class="w-[18px] h-[804px] bg-[#f0f0f0]" viewBox="1620 194 18 804" fill="none" stroke="#444" stroke-width="1.800"><path d="M1624 206l3.500-4 3.500 4M1624 987l3.500 4 3.500-4" /><path d="M1620 588h15v17h-15z" fill="#cdcdcd" stroke="none" /></svg>
      </div>

      <!-- view control bar -->
      <div class="flex h-[18px] bg-[#f0f0f0] border-b-2 border-white">
        <span class="w-[77px] pl-[26px] leading-4 text-black text-[10.800px]">1 : 200</span>
        <svg class="w-[252px] h-4" viewBox="298 998 252 16" fill="none" stroke="#333" stroke-width="1.100">
          <path d="M302.500 1000.500h15v11h-15z" fill="#fff" /><path d="M303 1004l3-3M303 1008l7-7M303 1011l10-10M307 1011l10-10M311 1011l6-6M315 1011l2-2M305 1011l-2-2M309 1011l-6-6M313 1011l-10-10M317 1011l-10-10M317 1007l-6-6M317 1003l-2-2" stroke-width=".7" stroke="#555" />
          <path d="M324.500 1003.500l4-3h10v7l-4 4h-10zM324.500 1003.500h10v8M334.500 1003.500l4-3" fill="#a9d8f8" stroke="#1f66a8" />
          <circle cx="351" cy="1005" r="3.500" fill="#ffe79a" stroke="#d68a12" /><path d="M351 999v-1M345 1005h-1.500M347 1001l-1-1M347 1009l-1 1M355 1001l1-1" stroke="#d68a12" />
          <circle cx="373" cy="1004" r="4.500" fill="#d6ecfb" stroke="#2b6fb5" /><path d="M366 1012h9" />
          <path d="M385 1008h4v-6h10M391 1000v11M395 1000v11" stroke="#1f66a8" stroke-width="1.500" /><path d="M406 1008h4v-6h7M412 1002v9M412 1006h3" stroke="#1f66a8" stroke-width="1.500" /><circle cx="419" cy="1004" r="2.800" fill="#d6ecfb" stroke="#2b6fb5" /><path d="M418 1009h3" />
          <path d="M427 1002l6 3M431 1006q2 5 5 0 1-4 5-4 2 4-3 6-3 2-4-2M441 1002l-3 7" /><circle cx="456" cy="1004" r="3" fill="#cfe8fb" stroke="#2b6fb5" /><path d="M454.500 1009h3M454.500 1011h3" />
          <path d="M470.500 1001.500h12v9h-12zM472 999v12M481 999v12" /><path d="M476.500 1003.500h8v8h-8z" fill="#eee" /><circle cx="480.500" cy="1007.500" r="1.800" />
          <path d="M491 1003l4-3h6v10M491 1003v9M496 1001v10M491 1007h10" stroke="#8a3b2a" /><circle cx="502" cy="1005" r="3.200" fill="#ffe04a" stroke="#d6a012" /><path d="M500.500 1010h3" />
          <path d="M512 999v13M511 1001.500h16M525 999v5" /><path d="M514 1010h7" stroke-dasharray="2 1" /><path d="M521.500 1006.500h6v5h-6z" fill="#888" />
          <path d="M541 1003l-3 3.500 3 3.500" stroke-width="1.700" />
          <g stroke="none"><use href="#redx" x="352" y="1004" width="8" height="8" /><use href="#redx" x="373" y="1004" width="8" height="8" /><use href="#redx" x="393" y="1004" width="8" height="8" /></g>
        </svg>
        <div class="grow pl-[517px]"><div class="w-[17px] h-[15px] bg-[#cdcdcd]"></div></div>
        <svg class="w-[38px] h-4" viewBox="1600 998 38 16" fill="none"><path d="M1609.500 1002.500l3.500 3.500-3.500 3.500" stroke="#444" stroke-width="1.800" /><path d="M1632 1003v2M1628 1007v2M1632 1007v2M1624 1011v2M1628 1011v2M1632 1011v2" stroke="#aaa" stroke-width="2" /></svg>
      </div>
    </section>

    <!-- project browser -->
    <aside class="ml-[2px] w-[280px] flex flex-col bg-white text-black text-[11.400px]">
      <div class="h-5 flex items-center justify-between bg-[#f0f0f0] pl-1 pr-[3px] text-[#333] text-[11.500px]">Navegador de proyectos - Proyecto1 <svg class="w-[10px] h-[10px]"><use href="#close" /></svg></div>
      <div class="flex">
        <svg class="w-[43px] h-[200px] shrink-0" viewBox="1640 193 43 200" fill="none">
          <path d="M1650.500 207v175h11M1650.500 202.500h11M1650.500 292.500h11M1650.500 310.500h11M1650.500 328.500h11M1650.500 346.500h11M1650.500 364.500h11M1670.500 210v65M1670.500 220.500h13M1670.500 238.500h13M1670.500 256.500h13M1670.500 274.500h13" stroke="#999" stroke-dasharray="1 1" />
          <use href="#minus" x="1646" y="199" width="9" height="9" /><use href="#plus" x="1666" y="217" width="9" height="9" /><use href="#plus" x="1666" y="235" width="9" height="9" /><use href="#plus" x="1666" y="253" width="9" height="9" /><use href="#plus" x="1666" y="271" width="9" height="9" />
          <use href="#plus" x="1646" y="307" width="9" height="9" /><use href="#plus" x="1646" y="343" width="9" height="9" /><use href="#plus" x="1646" y="361" width="9" height="9" />
          <g stroke="#3a3f4b" fill="#f3f3f3">
            <path d="M1666 195.500h-2.500v3M1674 195.500h2.500v3M1666 208.500h-2.500v-3M1674 208.500h2.500v-3" fill="none" /><path d="M1666.500 199.500l2-2h5v6l-2 2h-5z" />
            <path d="M1662.500 285.500h15v13h-15z" /><path d="M1662.500 287h15" stroke-width="2" /><path d="M1664.500 290.500h3v2h-3zM1664.500 294.500h3v2h-3zM1669 291.500h3M1673 291.500h3M1669 295.500h3M1673 295.500h3" fill="#555" />
            <path d="M1662.500 305.500h14v11h-14z" /><path d="M1662.500 306h14" stroke-width="2.500" /><path d="M1662.500 310.500h14M1662.500 313.500h14M1666.500 305v11" />
            <path d="M1662.500 322.500h11l4 4v8h-15z" /><path d="M1664.500 325.500h6v3h-3v4h-3zM1669.500 330.500h3v2h-3M1674 329v4" stroke="#44608c" />
            <path d="M1663.500 340.500h6v6h-6zM1671.500 340.500h5v12h-13v-4h8z" /><path d="M1665 359.500h-2v12h2M1674 359.500h2v12h-2" fill="none" /><circle cx="1668.500" cy="364.500" r="3" /><path d="M1668.500 365.500h5v4h-5z" fill="#ccc" />
          </g>
          <g stroke="#b98a0a" stroke-width="1.600" fill="#ffe14a"><rect x="1663" y="379.500" width="7" height="5" rx="2.500" /><rect x="1670" y="379.500" width="7" height="5" rx="2.500" /><path d="M1666 382h8" /></g>
        </svg>
        <ul class="leading-[18px]">
          <li class="-ml-px pl-[2px] w-[72px] bg-[#e3e3e3]">Vistas (todo)</li>
          <li class="pl-[5px]">Planos de planta</li>
          <li class="pl-[5px]">Planos de techo</li>
          <li class="pl-[5px]">Vistas 3D</li>
          <li class="pl-[5px]">Alzados (Alzado 1)</li>
          <li class="pl-px">Leyendas</li>
          <li class="pl-px">Tablas de planificación/Cantidades (todo)</li>
          <li class="pl-px">Planos (todo)</li>
          <li class="pl-px">Familias</li>
          <li class="pl-px">Grupos</li>
          <li class="pl-px">Vínculos de Revit</li>
        </ul>
      </div>
    </aside>
  </main>

  <!-- status bar -->
  <footer class="flex items-center h-6 shrink-0 bg-[#cbcbcb] text-black">
    <span class="w-[889px] pl-px text-[11.150px]">Clic para seleccionar, TAB para alternar, CTRL para añadir y MAYÚS para anular una selección.</span>
    <svg class="w-7 h-6" viewBox="889 1016 28 24" fill="#e8f4fb" stroke="#2b6fb5" stroke-width="1.200"><path d="M893.500 1027.500l2-2h6v9l-2 2h-6z" /><path d="M897.500 1023.500l3-2.500h5v5l-3 2h-5z" fill="#d8f0c8" stroke="#3e8a2e" /><path d="M903 1027q0 3 2 3v6M908 1027q0 3-2 3v6" /></svg>
    <div class="w-[204px] h-[18px] bg-white flex justify-end"><div class="w-[18px] border-l border-[#e3e3e3] flex items-center justify-end pr-[2px]"><svg class="w-[9px] h-[6px] opacity-70"><use href="#chev" /></svg></div></div>
    <svg class="ml-[8px] w-[18px] h-[18px]" viewBox="0 0 18 18" stroke="#8f8f8f" fill="#e8e8e8"><path d="M6.500 1.500h9v4h-3l-2 3h-2l1-3h-3z" /><path d="M7 9l-2 4h3l-4 5H2l1-5z" fill="#888" /></svg>
    <span class="w-[34px] pl-[3px]">:0</span>
    <svg class="w-[46px] h-6" viewBox="1181 1016 46 24" fill="#f3f3f3" stroke="#2f3a45"><path d="M1184.500 1021.500h14v14h-14z" /><path d="M1184 1023h15" stroke-width="2" /><path d="M1187 1026h2M1187.500 1026v7M1190 1029.500h6M1190 1032.500h6M1187 1029.500h2" /><path d="M1212 1021h13v15h-13z" fill="#9b9b9b" stroke="none" /><path d="M1209 1028.500h5v-3l5 4-5 4v-3h-5z" fill="#b9b9b9" stroke="#888" /><path d="M1214 1035.500h11v-12" stroke="#eee" /></svg>
    <div class="ml-[6px] w-[204px] h-[18px] bg-white flex justify-between text-[#7a7a7a] pl-[3px] leading-[18px]">Modelo base<div class="w-[18px] border-l border-[#e3e3e3] flex items-center justify-end pr-[2px]"><svg class="w-[9px] h-[6px] opacity-70"><use href="#chev" /></svg></div></div>
    <svg class="ml-[228px] w-[172px] h-6" viewBox="1665 1016 172 24" fill="none" stroke="#555">
      <rect x="1668.500" y="1022.500" width="7" height="4.500" rx="2" stroke="#b98a0a" stroke-width="1.700" fill="#ffe14a" /><rect x="1675.500" y="1022.500" width="7" height="4.500" rx="2" stroke="#b98a0a" stroke-width="1.700" fill="#ffe14a" />
      <path d="M1694.500 1031.500l9-9v9zM1695 1034.500h9" fill="#cfe8fb" stroke="#2b6fb5" />
      <path d="M1722.500 1021.500h9v3h-2v4h2v2h-10v-2h2v-4h-1zM1726 1031v6" fill="#f8b878" stroke="#b85a10" />
      <path d="M1747.500 1024.500l5-3v12l-5 3zM1752.500 1021.500h5M1752.500 1033.500h3" fill="#a9d3f5" stroke="#2b6fb5" />
      <path d="M1772 1026.500h11M1777.500 1021v11M1775.500 1023l2-2 2 2M1775.500 1030l2 2 2-2M1774 1024.500l-2 2 2 2M1781 1024.500l2 2-2 2" stroke="#333" stroke-width="1.300" />
      <circle cx="1805.500" cy="1028" r="5.300" stroke="#a2a2a2" stroke-width="3" stroke-dasharray="3 1.160" />
      <path d="M1821.500 1021.500h14l-5 7v8l-4-2v-6z" fill="#d8d8d8" stroke="#666" />
      <g stroke="none"><use href="#redx" x="1703" y="1020" width="7" height="7" /><use href="#redx" x="1755" y="1020" width="7" height="7" /><use href="#cursor" x="1674" y="1025" width="8" height="12" /><use href="#cursor" x="1702" y="1025" width="8" height="12" /><use href="#cursor" x="1727" y="1025" width="8" height="12" /><use href="#cursor" x="1753" y="1025" width="8" height="12" /><use href="#cursor" x="1780" y="1025" width="8" height="12" /></g>
    </svg>
    <span class="text-[#444]">:1</span>
  </footer>

  <!-- taskbar -->
  <footer class="flex h-10 shrink-0 bg-[#cfe2e8] text-[#111]">
    <svg class="w-[1506px] h-10 shrink-0" viewBox="0 1040 1506 40" fill="none">
      <path d="M343 1040h48v40h-48z" fill="#edf5f8" /><path d="M343 1078h48v2h-48zM445 1078h49v2h-49zM494 1078h49v2h-49z" fill="#0f72c4" />
      <path d="M16 1054.300l6.500-1v6.200H16zM23.500 1053.100l8.500-1.300v7.700h-8.500zM16 1060.500h6.500v6.300l-6.500-1zM23.500 1060.500H32v7.700l-8.500-1.200z" fill="#111" />
      <circle cx="72" cy="1060" r="6.500" stroke="#111" stroke-width="2" />
      <path d="M112.500 1056.500h10v7h-10zM112.500 1052v2h10v-2M112.500 1068v-2h10v2M126.500 1052v16" stroke="#111" stroke-width="1.300" /><path d="M125 1056h3v3h-3z" fill="#111" />
      <circle cx="171" cy="1060" r="12" fill="#1779c9" /><path d="M159 1058q1-10 12-10 12 1 12 11 0 6-7 6-5 0-4-4 1-5-4-6-5 0-9 3z" fill="#4bcf72" /><path d="M160 1056q5-8 13-7 8 1 9 8-5-7-13-5-6 0-9 4z" fill="#3bb9d8" /><path d="M167 1060q0-4 4-4 3 1 2 5-1 5 5 5l3-1q-4 4-9 3-5-2-5-8z" fill="#cfe2e8" /><path d="M161 1060q0 11 12 12-8-3-8-13z" fill="#0f55a0" />
      <path d="M208 1051h9l2 3h12v14h-23z" fill="#e9b32b" /><path d="M208 1056h23v13h-23z" fill="#fbd75b" /><path d="M213 1069v-8h14v8h-4v-3h-6v3z" fill="#3d86cc" />
      <path d="M257 1058l12.500-10 12.500 10v13h-25z" fill="#0f5fae" /><path d="M259 1058h21l-10 8z" fill="#fff" /><path d="M257 1058l12.500 9 12.500-9v13h-25z" fill="#28a0e6" />
      <use href="#chrome" x="305" y="1048" width="25" height="24" />
      <path d="M360 1051h8q7 0 7 6 0 3.500-3.300 4.800L376 1069h-4.800l-3.600-6.500h-3v6.500H360zM364.600 1054.500v4.600h2.700q2.700 0 2.700-2.300t-2.700-2.300z" fill="#2a66ad" fill-rule="evenodd" />
      <path d="M407 1053l10-5 8 2.500v19l-8 2.500-10-4 10 1.200v-17l-6 1.800v11l-4 2z" fill="#e03c12" />
      <circle cx="466" cy="1060" r="11.500" fill="#ee7a57" /><path d="M466 1048.500a11.500 11.500 0 0 1 11.500 11.500H466z" fill="#f6a184" /><path d="M454.600 1061.500h22.800a11.500 11.500 0 0 1-22.800 0z" fill="#d0421e" /><rect x="453" y="1054" width="12" height="12" rx="1" fill="#c4371a" /><text x="459" y="1064" font-size="10" font-weight="bold" text-anchor="middle" fill="#fff">P</text>
      <use href="#chrome" x="502.500" y="1048" width="24" height="24" /><circle cx="521" cy="1066" r="7" fill="#8b7768" /><path d="M517 1072q1-6 4-6t5 5q-3 3-9 1z" fill="#e9e2dd" /><circle cx="521" cy="1063.500" r="2.600" fill="#d9b9a2" />
      <circle cx="1490" cy="1058" r="7.500" stroke="#f5b21c" stroke-width="3.500" fill="#fbd04a" /><path d="M1484 1069q-5 0-5-4.500t5-4.500q2-4 6.500-3.500 4 .5 5 4 5.500 0 5.500 4.500t-5 4z" fill="#f1f5fb" />
    </svg>
    <span class="w-[141px] pl-[5px] pt-[11px] leading-5 text-[13.100px] flex gap-[10px]"><span>22°C</span><span>Parc. soleado</span></span>
    <svg class="w-[115px] h-10" viewBox="1647 1040 115 40" fill="none" stroke="#222" stroke-width="1.300">
      <path d="M1647.500 1063l5.500-5.500 5.500 5.500" /><path d="M1672.500 1056.500h7v7h-7zM1679.500 1058.500l3.500-2v7l-3.500-2M1673 1053q5-2 9 0M1673 1067q5 2 9 0" />
      <path d="M1696 1067q1-11 12-12M1699 1067q1-8 9-9M1702 1067q1-5 6-6" /><circle cx="1707" cy="1066" r="1.200" fill="#222" />
      <path d="M1717.500 1058.500h3l4-3.500v11l-4-3.500h-3zM1727 1058q1.500 2.500 0 5M1729.500 1056q3 4.500 0 9" /><path d="M1732 1054.500q4 6 0 12" stroke="#999" />
      <path d="M1741 1055l4-2.500 4 2.500-4 2.500zM1749 1055l4-2.500 4 2.500-4 2.500zM1749 1060l4-2.500 4 2.500-4 2.500zM1749 1064l3 2 2-2z" fill="#111" stroke="none" /><rect x="1741" y="1058.500" width="9" height="9.500" rx="1.500" fill="#d4122a" stroke="none" /><text x="1745.500" y="1066.500" font-size="8.500" font-weight="bold" text-anchor="middle" fill="#fff" stroke="none">5</text>
    </svg>
    <p class="w-[34px] pt-[2px] text-center leading-[18px] text-[11.200px]">ESP<br />ES</p>
    <p class="w-[72px] pt-[2px] text-center leading-[18px] text-[11px]">01:00 p. m.<br />03/09/2022</p>
    <svg class="ml-2 w-11 h-10" viewBox="1876 1040 44 40"><path d="M1879 1052h16v12h-8l-4 4v-4h-4z" fill="#111" /><path d="M1881 1055.500h11M1881 1058.500h11M1881 1061.500h7" stroke="#fff" /><circle cx="1894.500" cy="1067" r="8" fill="#c3c8ca" stroke="#777" /><text x="1894.500" y="1071" font-size="11" font-weight="600" text-anchor="middle" fill="#111">4</text><path d="M1915.500 1040v40" stroke="#8fa3a9" /></svg>
  </footer>

  <script>
    /* scalloped foliage edges of the garden */
    const edges = [
      [[455,84],[520,80],[575,90],[600,120],[608,160],[605,210],[590,260],[575,310],[545,325],[500,315],[465,305]],
      [[645,90],[645,125],[680,165],[720,180],[745,230],[762,270],[755,330],[745,380],[728,400],[735,440],[728,485]],
      [[645,88],[700,80],[760,82],[808,90],[806,150],[808,220],[806,300],[808,380],[804,440],[806,482],[735,484]],
      [[462,375],[510,375],[535,395],[545,420],[558,445],[540,460]],
      [[440,380],[445,410],[405,430],[398,460],[402,500],[440,505]],
      [[375,100],[366,140],[376,180],[366,220],[390,245],[410,260],[400,290]]
    ];
    const garden = document.getElementById("garden");
    edges.forEach((pts, n) => {
      let d = `M${pts[0]}`;
      for (let i = 1; i < pts.length; i++) {
        const [x0, y0] = pts[i - 1], [x1, y1] = pts[i];
        const steps = Math.max(2, Math.round(Math.hypot(x1 - x0, y1 - y0) / 13));
        for (let s = 1; s <= steps; s++) {
          const k = ((i * 7 + s * 5 + n) % 5 - 2) * 3;
          const x = x0 + (x1 - x0) * s / steps + k, y = y0 + (y1 - y0) * s / steps - k / 2;
          d += `A7 7 0 0 ${(s + i) % 3 ? 1 : 0} ${x} ${y}`;
        }
      }
      const p = document.createElementNS("http://www.w3.org/2000/svg", "path");
      p.setAttribute("d", d);
      garden.appendChild(p);
    });
  </script>
</body>
</html>
